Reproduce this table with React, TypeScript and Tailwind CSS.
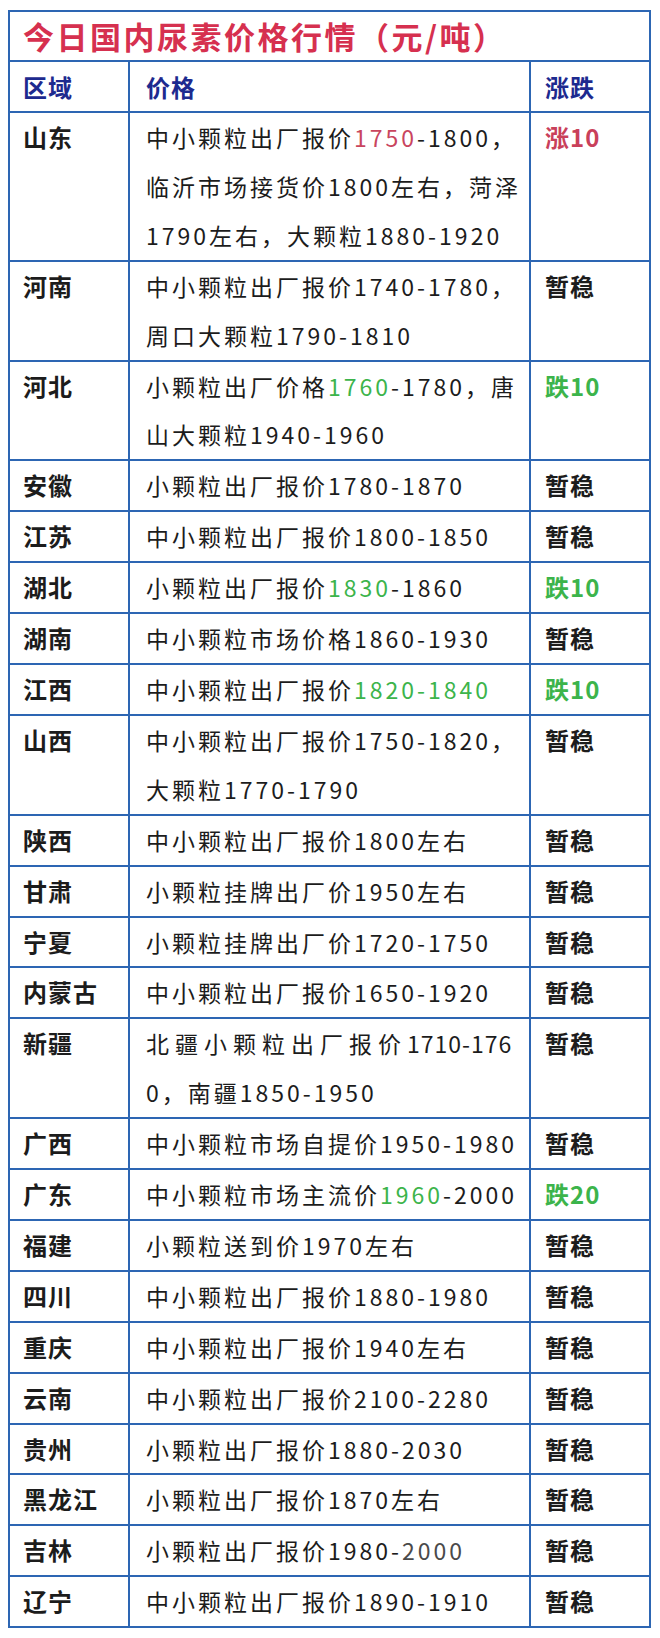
import type { ReactNode } from "react"

type Tone = "up" | "down" | "flat"

interface PriceRow {
  region: string
  lines: ReactNode[]
  change: string
  tone: Tone
}

const Up = ({ children }: { children: ReactNode }) => (
  <span className="text-[#c9455e]">{children}</span>
)
const Down = ({ children }: { children: ReactNode }) => (
  <span className="text-[#3cb44b]">{children}</span>
)

const rows: PriceRow[] = [
  {
    region: "山东",
    lines: [
      <>
        中小颗粒出厂报价<Up>1750</Up>-1800，
      </>,
      "临沂市场接货价1800左右，菏泽",
      "1790左右，大颗粒1880-1920",
    ],
    change: "涨10",
    tone: "up",
  },
  {
    region: "河南",
    lines: ["中小颗粒出厂报价1740-1780，", "周口大颗粒1790-1810"],
    change: "暂稳",
    tone: "flat",
  },
  {
    region: "河北",
    lines: [
      <>
        小颗粒出厂价格<Down>1760</Down>-1780，唐
      </>,
      "山大颗粒1940-1960",
    ],
    change: "跌10",
    tone: "down",
  },
  { region: "安徽", lines: ["小颗粒出厂报价1780-1870"], change: "暂稳", tone: "flat" },
  { region: "江苏", lines: ["中小颗粒出厂报价1800-1850"], change: "暂稳", tone: "flat" },
  {
    region: "湖北",
    lines: [
      <>
        小颗粒出厂报价<Down>1830</Down>-1860
      </>,
    ],
    change: "跌10",
    tone: "down",
  },
  { region: "湖南", lines: ["中小颗粒市场价格1860-1930"], change: "暂稳", tone: "flat" },
  {
    region: "江西",
    lines: [
      <>
        中小颗粒出厂报价<Down>1820-1840</Down>
      </>,
    ],
    change: "跌10",
    tone: "down",
  },
  {
    region: "山西",
    lines: ["中小颗粒出厂报价1750-1820，", "大颗粒1770-1790"],
    change: "暂稳",
    tone: "flat",
  },
  { region: "陕西", lines: ["中小颗粒出厂报价1800左右"], change: "暂稳", tone: "flat" },
  { region: "甘肃", lines: ["小颗粒挂牌出厂价1950左右"], change: "暂稳", tone: "flat" },
  { region: "宁夏", lines: ["小颗粒挂牌出厂价1720-1750"], change: "暂稳", tone: "flat" },
  { region: "内蒙古", lines: ["中小颗粒出厂报价1650-1920"], change: "暂稳", tone: "flat" },
  {
    region: "新疆",
    lines: [
      <>
        <span className="tracking-[6px]">北疆小颗粒出厂报价</span>
        <span className="tracking-[1px]">1710-176</span>
      </>,
      "0，南疆1850-1950",
    ],
    change: "暂稳",
    tone: "flat",
  },
  { region: "广西", lines: ["中小颗粒市场自提价1950-1980"], change: "暂稳", tone: "flat" },
  {
    region: "广东",
    lines: [
      <>
        中小颗粒市场主流价<Down>1960</Down>-2000
      </>,
    ],
    change: "跌20",
    tone: "down",
  },
  { region: "福建", lines: ["小颗粒送到价1970左右"], change: "暂稳", tone: "flat" },
  { region: "四川", lines: ["中小颗粒出厂报价1880-1980"], change: "暂稳", tone: "flat" },
  { region: "重庆", lines: ["中小颗粒出厂报价1940左右"], change: "暂稳", tone: "flat" },
  { region: "云南", lines: ["中小颗粒出厂报价2100-2280"], change: "暂稳", tone: "flat" },
  { region: "贵州", lines: ["小颗粒出厂报价1880-2030"], change: "暂稳", tone: "flat" },
  { region: "黑龙江", lines: ["小颗粒出厂报价1870左右"], change: "暂稳", tone: "flat" },
  {
    region: "吉林",
    lines: [
      <>
        小颗粒出厂报价1980-<span className="text-[#4a4a4a]">2000</span>
      </>,
    ],
    change: "暂稳",
    tone: "flat",
  },
  { region: "辽宁", lines: ["中小颗粒出厂报价1890-1910"], change: "暂稳", tone: "flat" },
]

const toneClass: Record<Tone, string> = {
  up: "text-[#c9405a]",
  down: "text-[#3cb44b]",
  flat: "text-[#1c1c1c]",
}

export default function App() {
  return (
    <div
      className="min-h-[1638px] bg-white pt-[10px]"
      style={{ fontFamily: '"Noto Sans CJK SC", "Noto Sans", sans-serif' }}
    >
      <div className="ml-[8px] w-[643px] border-2 border-[#2d66b3]">
        {/* Title */}
        <div className="border-b-2 border-[#2d66b3] pl-[13px] text-[31px] font-bold leading-[48px] tracking-[2.5px] text-[#d6304f]">
          今日国内尿素价格行情（元/吨）
        </div>

        {/* Header */}
        <div className="grid grid-cols-[120px_401px_1fr] border-b-2 border-[#2d66b3] text-[24px] font-bold leading-[49px] tracking-[1px] text-[#1d2a8f]">
          <div className="border-r-2 border-[#2d66b3] pl-[13px]">区域</div>
          <div className="border-r-2 border-[#2d66b3] pl-4">价格</div>
          <div className="pl-[14px]">涨跌</div>
        </div>

        {/* Rows */}
        {rows.map((row, i) => (
          <div
            key={row.region}
            className={`grid grid-cols-[120px_401px_1fr] ${
              i < rows.length - 1 ? "border-b-2 border-[#2d66b3]" : ""
            }`}
          >
            <div className="border-r-2 border-[#2d66b3] pl-[13px] text-[24px] font-bold leading-[48.9px] tracking-[1px] text-[#1c1c1c]">
              {row.region}
            </div>
            <div className="border-r-2 border-[#2d66b3] pl-4 text-[23px] leading-[48.9px] tracking-[3px] text-[#1c1c1c]">
              {row.lines.map((line, j) => (
                <div key={j} className="whitespace-nowrap">
                  {line}
                </div>
              ))}
            </div>
            <div
              className={`pl-[14px] text-[24px] font-bold leading-[48.9px] tracking-[1px] ${toneClass[row.tone]}`}
            >
              {row.change}
            </div>
          </div>
        ))}
      </div>
    </div>
  )
}
